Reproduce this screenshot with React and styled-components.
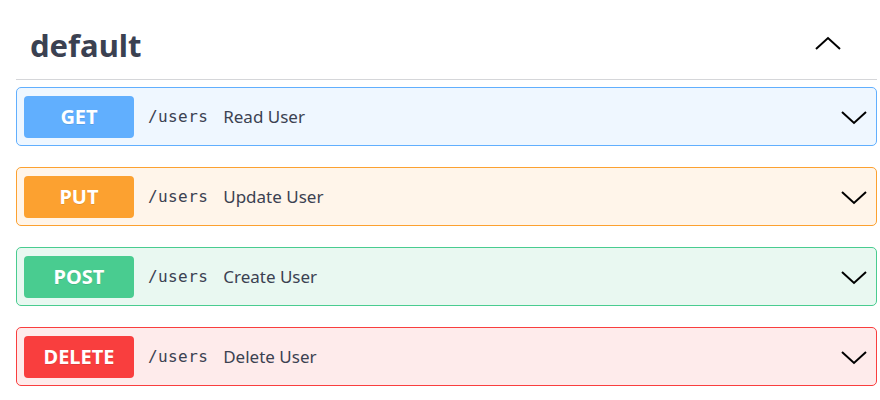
import React from 'react'
import styled, { createGlobalStyle } from 'styled-components'

const GlobalStyle = createGlobalStyle`
  body {
    margin: 0;
    background: #fff;
    font-family: "Noto Sans", "Open Sans", sans-serif;
    color: #3b4151;
  }
`

const methods = {
  GET: { main: '#61affe', bg: '#eff7ff' },
  PUT: { main: '#fca130', bg: '#fff5ea' },
  POST: { main: '#49cc90', bg: '#e9f8f1' },
  DELETE: { main: '#f93e3e', bg: '#feebeb' },
}

const ops = [
  { method: 'GET', path: '/users', summary: 'Read User' },
  { method: 'PUT', path: '/users', summary: 'Update User' },
  { method: 'POST', path: '/users', summary: 'Create User' },
  { method: 'DELETE', path: '/users', summary: 'Delete User' },
]

const Section = styled.div`
  padding: 0 3px 0 16px;
`

const TagHeader = styled.div`
  height: 79px;
  display: flex;
  align-items: center;
  justify-content: space-between;
  border-bottom: 1px solid #d5d6d9;
  padding: 0 36px 0 14px;
  margin-bottom: 7px;
`

const TagTitle = styled.h3`
  margin: 0;
  font-size: 31px;
  font-weight: 700;
  color: #3b4151;
  padding-top: 10px;
`

const UpIcon = styled.span`
  display: flex;
  padding-top: 8px;
`

const OpList = styled.div`
  display: flex;
  flex-direction: column;
  gap: 21px;
`

const Block = styled.div`
  display: flex;
  align-items: center;
  height: 57px;
  border: 1px solid ${p => p.$main};
  background: ${p => p.$bg};
  border-radius: 5px;
  padding: 0 9px 0 7px;
`

const Badge = styled.span`
  width: 110px;
  height: 42px;
  display: flex;
  align-items: center;
  justify-content: center;
  border-radius: 4px;
  background: ${p => p.$main};
  color: #fff;
  font-size: 20px;
  font-weight: 700;
  text-shadow: 0 1px 0 rgba(0, 0, 0, 0.1);
`

const Path = styled.span`
  margin-left: 14px;
  font-family: "DejaVu Sans Mono", "Liberation Mono", monospace;
  font-size: 16px;
  font-weight: 400;
  letter-spacing: 0.4px;
  color: #3b4151;
`

const Summary = styled.span`
  margin-left: 15px;
  font-size: 17px;
  color: #3b4151;
  flex: 1;
`

const Chevron = ({ up }) => (
  <svg width="26" height="16" viewBox="0 0 26 16">
    <polyline
      points={up ? '1,13 13,2 25,13' : '1,3 13,14 25,3'}
      fill="none"
      stroke="#000"
      strokeWidth="2"
    />
  </svg>
)

const App = () => {
  return (
    <>
      <GlobalStyle />
      <Section>
        <TagHeader>
          <TagTitle>default</TagTitle>
          <UpIcon>
            <Chevron up />
          </UpIcon>
        </TagHeader>
        <OpList>
          {ops.map((op, index) => {
            const c = methods[op.method]
            return (
              <Block key={index} $main={c.main} $bg={c.bg}>
                <Badge $main={c.main}>{op.method}</Badge>
                <Path>{op.path}</Path>
                <Summary>{op.summary}</Summary>
                <Chevron />
              </Block>
            )
          })}
        </OpList>
      </Section>
    </>
  )
}

export default App
